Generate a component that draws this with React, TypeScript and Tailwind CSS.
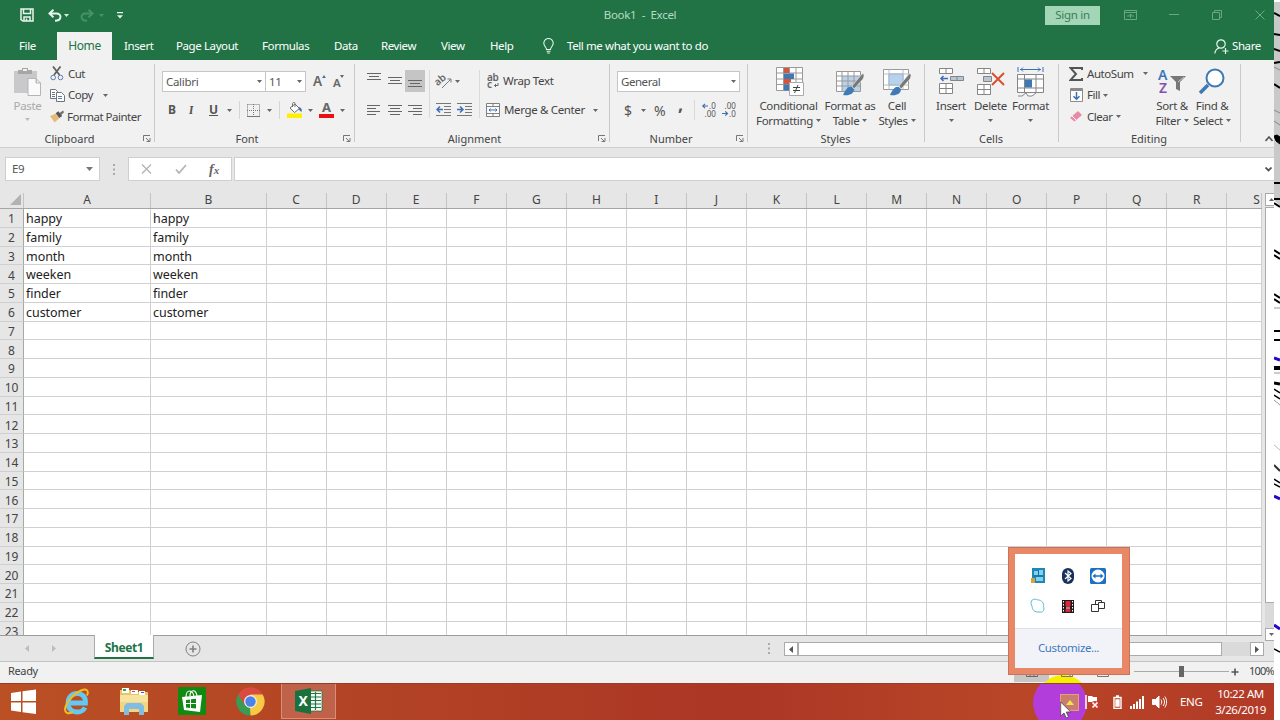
import React from 'react';

const columns = ['A', 'B', 'C', 'D', 'E', 'F', 'G', 'H', 'I', 'J', 'K', 'L', 'M', 'N', 'O', 'P', 'Q', 'R', 'S'];
const words = ['happy', 'family', 'month', 'weeken', 'finder', 'customer'];
const rows = Array.from({ length: 23 }, (_, i) => i + 1);

const tabs = [
  { label: 'Insert', width: 'w-[52px]' },
  { label: 'Page Layout', width: 'w-[86px]' },
  { label: 'Formulas', width: 'w-[72px]' },
  { label: 'Data', width: 'w-[47px]' },
  { label: 'Review', width: 'w-[60px]' },
  { label: 'View', width: 'w-[49px]' },
  { label: 'Help', width: 'w-[52px]' },
];

const colWidth = (i: number) => (i === 0 ? 127 : i === 1 ? 115.6 : i === 18 ? 34.6 : 60.06);

type BoxProps = { className?: string; children?: React.ReactNode };

function Caret({ className = 'text-[#666]' }: { className?: string }) {
  return (
    <svg className={`shrink-0 ${className}`} width="5" height="3" viewBox="0 0 5 3" fill="currentColor">
      <path d="M0 0h5L2.5 3z" />
    </svg>
  );
}

function Launcher() {
  return (
    <svg width="8" height="7" viewBox="0 0 8 7" fill="none" stroke="#777">
      <path d="M.5 6V.5H7M3 3l3 3M7 3v3.5H3.5" />
    </svg>
  );
}

function Group({ label, width, pad = '', launcher, children }: { label: string; width: string; pad?: string; launcher?: boolean; children: React.ReactNode }) {
  return (
    <div className={`${width} relative flex h-[86px] shrink-0 flex-col`}>
      <div className={`h-[71px] ${pad}`}>{children}</div>
      <div className={`flex h-[15px] items-center justify-center text-[11px] leading-none text-[#444] ${launcher ? 'pr-4' : 'pr-[2px]'}`}>{label}</div>
      {launcher && <div className="absolute right-[4px] bottom-[4px]"><Launcher /></div>}
      <div className="absolute top-[4px] right-0 h-[78px] w-px bg-[#c9c9c9]" />
    </div>
  );
}

function Slot({ className = '', children }: BoxProps) {
  return <div className={`flex h-full shrink-0 items-center whitespace-nowrap ${className}`}>{children}</div>;
}

function Lines({ d }: { d: string }) {
  return (
    <svg width="14" height="13" viewBox="0 0 14 13" fill="none" stroke="#666">
      <path d={d} />
    </svg>
  );
}

function TitleBar() {
  return (
    <div className="flex h-[30px] items-center text-[#e8f6ec]">
      <Slot className="w-[28px] pl-[20px]">
        <svg className="shrink-0" width="14" height="14" viewBox="0 0 14 14" fill="none" stroke="currentColor" strokeWidth="1.5">
          <path d="M1 1h12v12H3L1 11.5zM3.5 1v4.5h7V1M4 13V9h6v4M6.5 10.5V13" />
        </svg>
      </Slot>
      <Slot className="ml-[20px] w-[16px]">
        <svg width="14" height="13" viewBox="0 0 14 13" fill="none" stroke="currentColor" strokeWidth="1.9">
          <path d="M5.5.8 1.3 4.5l4.2 3.7M1.5 4.5h7c5.5 0 5.500 7.300-1.500 7.300" />
        </svg>
      </Slot>
      <Slot className="w-[16px]"><Caret className="text-[#d5ecdc]" /></Slot>
      <Slot className="w-[19px] opacity-50">
        <svg width="14" height="13" viewBox="0 0 14 13" fill="none" stroke="#6fae88" strokeWidth="1.9">
          <path d="m8.500.8 4.200 3.700-4.200 3.700M12.500 4.500h-7c-5.500 0-5.500 7.300 1.500 7.300" />
        </svg>
      </Slot>
      <Slot className="w-[18px] opacity-50"><Caret className="text-[#6fae88]" /></Slot>
      <Slot className="w-[479px]">
        <svg width="6" height="7" viewBox="0 0 6 7" fill="currentColor"><path d="M0 0h6v1.200H0zM0 3.200h6L3 6.500z" /></svg>
      </Slot>
      <Slot className="w-[88px] justify-center text-[11.500px] tracking-[-0.3px] whitespace-pre text-[#b5dbc2]">Book1  -  Excel</Slot>
      <div className="ml-[361px] flex h-[19px] w-[55px] shrink-0 items-center justify-center bg-[#a3d5b7] text-[11.500px] tracking-[-0.3px] text-[#3a7d56]">Sign in</div>
      <svg className="ml-[24px] shrink-0" width="13" height="10" viewBox="0 0 13 10" fill="none" stroke="#6aa883">
        <path d="M.5.5h12v9H.5zM.5 2.500h12M3 6h2.500M7.500 6H10M6.500 8V4M5 5.500 6.500 4 8 5.500" />
      </svg>
      <svg className="ml-[32px] shrink-0" width="10" height="10" viewBox="0 0 10 10" stroke="#6aa883"><path d="M0 4.500h10" /></svg>
      <svg className="ml-[33px] shrink-0" width="10" height="10" viewBox="0 0 10 10" fill="none" stroke="#6aa883"><path d="M.5 2.500h7v7h-7zM2.500 2.500v-2h7v7h-2" /></svg>
      <svg className="ml-[33px] shrink-0" width="10" height="10" viewBox="0 0 10 10" fill="none" stroke="#6aa883"><path d="m.5.5 9 9M9.500.5l-9 9" /></svg>
    </div>
  );
}

function TabBar() {
  return (
    <div className="flex h-[30px] items-center pt-[2px] text-[11.500px] tracking-[-0.400px] text-white">
      <Slot className="w-[57px] pl-[19px]">File</Slot>
      <div className="flex h-[28px] w-[55px] shrink-0 items-center justify-center bg-[#f1f1f1] text-[12px] text-[#217346]">Home</div>
      <div className="w-[12px] shrink-0" />
      {tabs.map((tab) => (
        <Slot key={tab.label} className={tab.width}>{tab.label}</Slot>
      ))}
      <Slot className="w-[25px]">
        <svg className="ml-px" width="11" height="16" viewBox="0 0 11 16" fill="none" stroke="#e8f6ec" strokeWidth="1.100">
          <path d="M3.500 11.500c0-2.500-2.700-3.200-2.700-6.300a4.700 4.700 0 0 1 9.400 0c0 3.100-2.700 3.800-2.700 6.300zM3.500 13.300h4M4.200 15h2.600" />
        </svg>
      </Slot>
      <Slot className="w-[647px]">Tell me what you want to do</Slot>
      <Slot className="w-[18px]">
        <svg width="15" height="15" viewBox="0 0 15 15" fill="none" stroke="#e8f6ec" strokeWidth="1.200">
          <circle cx="7" cy="5" r="4.200" /><path d="M.8 14.500c.4-3 2-4.800 4.200-5.500M11.500 9v6M8.500 12h6" />
        </svg>
      </Slot>
      <Slot>Share</Slot>
    </div>
  );
}

function ClipboardGroup() {
  return (
    <Group label="Clipboard" width="w-[155px]" pad="flex" launcher>
      <div className="flex w-[50px] flex-col items-center pt-[7px] pl-[5px] text-[11.500px] text-[#a9a9a9]">
        <svg width="27" height="29" viewBox="0 0 27 29">
          <path d="M0 4h23v22H0z" fill="#c9c9cb" /><path d="M4 3h4V1h6v2h4v4H4z" fill="#a6a6a6" /><path d="M9 2h4v2H9z" fill="#f1f1f1" />
          <path d="M14 11.500h8l4.500 4.500v12.500H14zM22 11.500V16h4.500" fill="#fafafa" stroke="#b5b5b5" />
        </svg>
        <div className="mt-[2px] leading-[16px] tracking-[-0.3px]">Paste</div>
        <Caret className="mt-[4px] text-[#bbb]" />
      </div>
      <div className="text-[11.500px] tracking-[-0.5px]">
        <div className="mt-[3px] flex h-[21px] items-center">
          <svg className="mr-[4px]" width="14" height="15" viewBox="0 0 14 15" fill="none">
            <path d="M3 .5 9.500 9M10.500.5 4 9" stroke="#606060" strokeWidth="1.800" /><circle cx="3.200" cy="11.500" r="2.300" stroke="#5a7fb2" /><circle cx="10.500" cy="11.500" r="2.300" stroke="#5a7fb2" />
          </svg>Cut
        </div>
        <div className="flex h-[22px] items-center">
          <svg className="mr-[3px]" width="15" height="13" viewBox="0 0 15 13" fill="#fff" stroke="#6d7480">
            <path d="M.5.5h5l2 2v7h-7zM2 3.500h3M2 5.500h3M2 7.500h3" /><path d="M6.500 3.500h5l3 3v6h-8z" /><path d="M8 7.500h4M8 9.500h4" stroke="#5a7fb2" />
          </svg>
          <span className="w-[35px]">Copy</span><Caret />
        </div>
        <div className="flex h-[21px] items-center">
          <svg className="mr-[3px]" width="14" height="13" viewBox="0 0 15 13">
            <path d="M0 6 6 3.500l4 5L5 13z" fill="#e5bb7a" /><path d="m6 3 3-2 4 5-3 2z" fill="#555" /><path d="m10 3 4-3 1 2-3 3z" fill="#6d6d6d" />
          </svg>Format Painter
        </div>
      </div>
    </Group>
  );
}

function FontGroup() {
  return (
    <Group label="Font" width="w-[200px]" launcher>
      <div className="flex h-[31px] pt-[11px] pl-[7px] text-[11.500px] tracking-[-0.3px] text-[#555]">
        <div className="flex h-[21px] w-[104px] shrink-0 items-center justify-between border border-[#c6c6c6] bg-white px-[3px]">Calibri <Caret /></div>
        <div className="flex h-[21px] w-[40px] shrink-0 items-center justify-between border border-l-0 border-[#c6c6c6] bg-white px-[3px]">11 <Caret /></div>
        <div className="flex h-[21px] w-[25px] shrink-0 items-center pl-[7px] text-[13.500px] font-semibold text-[#666]">A<svg className="mb-[11px] shrink-0" width="4" height="3" viewBox="0 0 4 3"><path d="M0 3h4L2 0z" fill="#4472b4" /></svg></div>
        <div className="flex h-[21px] items-center pt-[2px] pl-[2px] text-[11.500px] font-semibold text-[#666]">A<svg className="mb-[13px] shrink-0" width="4" height="3" viewBox="0 0 4 3"><path d="M0 0h4L2 3z" fill="#666" /></svg></div>
      </div>
      <div className="mt-[8px] flex h-[22px] items-center pl-[13px] text-[12px] text-[#555]">
        <b className="w-[21px] shrink-0">B</b>
        <i className="w-[20px] shrink-0 font-serif font-semibold">I</i>
        <span className="w-[17px] shrink-0 font-bold underline">U</span>
        <Caret className="ml-px text-[#666]" />
        <div className="mr-[7px] ml-[7px] h-[18px] w-px bg-[#d5d5d5]" />
        <svg className="mr-[7px] shrink-0" width="13" height="13" viewBox="0 0 13 13" fill="none" stroke="#777">
          <path d="M.5.5h12v12M.5.5v12M6.500 0v13M0 6.500h13" strokeDasharray="1 1" /><path d="M0 12.500h13" />
        </svg>
        <Caret />
        <div className="mr-[6px] ml-[7px] h-[18px] w-px bg-[#d5d5d5]" />
        <svg className="mr-[5px] ml-px shrink-0" width="16" height="16" viewBox="0 0 16 16">
          <path d="m3 6 5-4 4.500 4.500-5 4z" fill="#fff" stroke="#707070" /><path d="M5.500 5V1.500C6 0 8 0 8 1.500V5" fill="none" stroke="#707070" /><path d="M12 5c3 1 3 3 2.500 5-1.500-1-2.500-2-3-3z" fill="#4472b4" /><path d="M0 11.500h15V16H0z" fill="#ffef00" />
        </svg>
        <Caret />
        <div className="ml-[6px] flex w-[15px] shrink-0 flex-col items-center">
          <span className="h-[11px] text-[13px] leading-[11px] font-bold text-[#666]">A</span>
          <span className="mt-px h-[4px] w-[15px] bg-[#e81010]" />
        </div>
        <Caret className="ml-[6px] text-[#666]" />
      </div>
    </Group>
  );
}

function AlignmentGroup() {
  return (
    <Group label="Alignment" width="w-[255px]" launcher>
      <div className="flex pt-[10px] pl-[8px]">
        <div className="shrink-0">
          <div className="flex h-[22px] items-center">
            <div className="flex h-[21px] w-[21px] items-start justify-center pt-[2px]"><Lines d="M0 .5h14M2 3.500h10M0 6.500h14" /></div>
            <div className="flex h-[21px] w-[21px] items-start justify-center pt-[3px]"><Lines d="M0 3.500h14M2 6.500h10M0 9.500h14" /></div>
            <div className="flex h-[22px] w-[20px] items-end justify-center bg-[#c5c5c5] pb-[4px]"><Lines d="M0 5.500h14M2 8.500h10M0 11.500h14" /></div>
          </div>
          <div className="mt-[6px] flex h-[22px] items-center">
            <div className="w-[21px] pl-[4px]"><Lines d="M0 2.500h13M0 5.500h9M0 8.500h13M0 11.500h9" /></div>
            <div className="w-[21px] pl-[4px]"><Lines d="M0 2.500h14M2 5.500h10M0 8.500h14M2 11.500h10" /></div>
            <div className="w-[20px] pl-[3px]"><Lines d="M0 2.500h14M5 5.500h9M0 8.500h14M5 11.500h9" /></div>
          </div>
        </div>
        <div className="mr-[6px] ml-[4px] h-[48px] w-px shrink-0 bg-[#d9d9d9]" />
        <div className="w-[43px] shrink-0">
          <div className="flex h-[22px] items-center">
            <svg className="mr-[3px] overflow-visible" width="16" height="15" viewBox="0 0 16 15">
              <text x="0" y="11" fontSize="10" fontWeight="600" fill="#666" transform="rotate(-40 4 9) translate(0 -1)">ab</text><path d="M6 14 14.500 5.500M11.500 5h3.500v3.500" fill="none" stroke="#777" />
            </svg>
            <Caret />
          </div>
          <div className="mt-[6px] flex h-[22px] items-center gap-[6px]">
            <svg width="15" height="13" viewBox="0 0 15 13" fill="none">
              <path d="M0 .5h15M8 3.500h7M8 6.500h7M8 9.500h7M0 12.500h15" stroke="#777" /><path d="M7 6.500H1M4 3.500l-3 3 3 3" stroke="#3d6fb5" strokeWidth="1.500" />
            </svg>
            <svg width="15" height="13" viewBox="0 0 15 13" fill="none">
              <path d="M0 .5h15M8 3.500h7M8 6.500h7M8 9.500h7M0 12.500h15" stroke="#777" /><path d="M0 6.500h6M3 3.500l3 3-3 3" stroke="#3d6fb5" strokeWidth="1.500" />
            </svg>
          </div>
        </div>
        <div className="mr-[7px] h-[48px] w-px shrink-0 bg-[#d9d9d9]" />
        <div className="text-[11.500px] tracking-[-0.350px]">
          <div className="flex h-[22px] items-center">
            <svg className="mr-[3px] overflow-visible" width="13" height="16" viewBox="0 0 13 16">
              <text x="0" y="7.500" fontSize="10" fontWeight="600" fill="#666">ab</text><text x="0" y="14.500" fontSize="10" fontWeight="600" fill="#666">c</text><path d="M11 10v2.500H7.500M9 11l-1.500 1.500L9 14" fill="none" stroke="#666" />
            </svg>Wrap Text
          </div>
          <div className="mt-[7px] flex h-[22px] items-center">
            <svg className="mr-[4px] ml-[-1px] shrink-0" width="14" height="14" viewBox="0 0 14 14" fill="#fafafa" stroke="#808080">
              <path d="M.5.5h13v13H.5zM.5 3.500h13M.5 10.500h13M7 .5v3M7 10.500v3" /><path d="M3 7h8M4.500 5.500 3 7l1.500 1.500M9.500 5.500 11 7 9.500 8.500" fill="none" stroke="#3d6fb5" />
            </svg>
            <span className="w-[89px] whitespace-nowrap">Merge &amp; Center</span><Caret />
          </div>
        </div>
      </div>
    </Group>
  );
}

function NumberGroup() {
  return (
    <Group label="Number" width="w-[138px]" launcher>
      <div className="pt-[11px] pl-[7px] text-[11.500px] text-[#555]">
        <div className="flex h-[21px] w-[123px] items-center justify-between border border-[#c6c6c6] bg-white px-[3px] tracking-[-0.450px]">General <Caret /></div>
        <div className="mt-[7px] flex h-[22px] items-center text-[14px]">
          <span className="w-[17px] pl-[7px]">$</span><Caret className="ml-[7px] text-[#666]" />
          <span className="ml-[8px] w-[24px]">%</span>
          <span className="mb-[13px] w-[16px] text-[18px] leading-none font-bold">,</span>
          <div className="h-[20px] w-px shrink-0 bg-[#d9d9d9]" />
          <svg className="ml-[7px] shrink-0 overflow-visible" width="14" height="14" viewBox="0 0 14 14" fontSize="8" fill="#555">
            <path d="M6 3H.8M3 .8.8 3 3 5.200" fill="none" stroke="#3d6fb5" strokeWidth="1.200" /><text x="7" y="6">.0</text><text x="2.500" y="13.500">.00</text>
          </svg>
          <svg className="ml-[6px] shrink-0 overflow-visible" width="14" height="14" viewBox="0 0 14 14" fontSize="8" fill="#555">
            <path d="M0 10.500h5.500M3.300 8.300l2.200 2.200-2.200 2.200" fill="none" stroke="#3d6fb5" strokeWidth="1.200" /><text x="2.500" y="6">.00</text><text x="7" y="13.500">.0</text>
          </svg>
        </div>
      </div>
    </Group>
  );
}

function BigButton({ icon, first, second, width }: { icon: React.ReactNode; first: string; second?: string; width: string }) {
  return (
    <div className={`${width} flex shrink-0 flex-col items-center text-[11.500px] tracking-[-0.350px]`}>
      <div className="flex h-[31px] items-end">{icon}</div>
      <div className="mt-px h-[15px] leading-[15px] whitespace-nowrap">{first}</div>
      <div className="flex h-[15px] items-center gap-[3px] leading-[15px]">{second}<Caret /></div>
    </div>
  );
}

function Brush() {
  return <><path d="M16 19c-4-1-6 2-9 8 6 1 11-1 11-6z" fill="#3f7ab8" /><path d="m16 18 10-12c3-1 2 3 1 5l-9 10z" fill="#777" stroke="#f1f1f1" strokeWidth=".6" /></>;
}

function StylesGroup() {
  return (
    <Group label="Styles" width="w-[177px]" pad="flex pt-[6px] pl-[7px]">
      <BigButton width="w-[67px]" first="Conditional" second="Formatting" icon={
        <svg className="ml-[2px]" width="28" height="30" viewBox="0 0 28 30">
          <path d="M.5.500h26v23H.5zM.5 6h26M.5 12h26M.5 17.500h26M7.500.5v23M13.500.5v23M20 .5v23" fill="#fff" stroke="#999" />
          <path d="M8 1h5v5H8zM8 12h7v5H8z" fill="#d75438" /><path d="M8 6.500h10V12H8zM8 17.500h5v6H8z" fill="#3e78b5" />
          <path d="M13.500 15.500h14v13h-14z" fill="#fff" stroke="#aaa" /><path d="M17 20.500h7M17 23.500h7M22 18l-3.500 8" stroke="#444" />
        </svg>} />
      <BigButton width="w-[56px]" first="Format as" second="Table" icon={
        <svg width="29" height="29" viewBox="0 0 29 29">
          <path d="M.500 3.500h24v20H.5z" fill="#fff" /><path d="M6 8h18v15H6z" fill="#b9d2ea" /><path d="M.5 3.500h24v20H.5zM.5 8h24M.5 13h24M.5 18h24M6 3.500v20M12 3.500v20M18 3.500v20" fill="none" stroke="#999" /><Brush />
        </svg>} />
      <BigButton width="w-[38px]" first="Cell" second="Styles" icon={
        <svg width="29" height="29" viewBox="0 0 29 29">
          <path d="M.5 1.500h25v20H.5z" fill="#fff" stroke="#999" /><path d="M.5 6h25M.5 17h25M6 1.500v20M20 1.500v20" stroke="#bbb" /><path d="M6 6h14v11H6z" fill="#b9d2ea" stroke="#93b4d8" /><Brush />
        </svg>} />
    </Group>
  );
}

function CellsGroup() {
  return (
    <Group label="Cells" width="w-[134px]" pad="flex pt-[6px] pl-[7px]">
      <BigButton width="w-[38px]" first="Insert" icon={
        <svg width="25" height="30" viewBox="0 0 25 30" fill="#fff" stroke="#858585">
          <path d="M.5 1.500h13v5H.5zM7 1.500v5M.5 16.500h13v10H.5zM7 16.500v10M.5 21.500h13" /><path d="M11.500 9.500h13v4h-13zM18 9.500v4" fill="#b7c7d8" /><path d="M9 11.500H2M4.500 9 2 11.500 4.500 14" fill="none" stroke="#3d6fb5" strokeWidth="1.500" />
        </svg>} />
      <BigButton width="w-[41px]" first="Delete" icon={
        <svg width="28" height="30" viewBox="0 0 28 30" fill="#fff" stroke="#858585">
          <path d="M.5 1.500h13v5H.5zM7 1.500v5M.5 17.500h13v10H.5zM7 17.500v10M.5 22.500h13" /><path d="M6.500 9.500h8v5h-8z" fill="#b7c7d8" /><path d="m15 6 12 12M27 6 15 18" stroke="#d9502e" strokeWidth="2" />
        </svg>} />
      <BigButton width="w-[39px]" first="Format" icon={
        <svg width="27" height="30" viewBox="0 0 27 30" fill="#fff" stroke="#858585">
          <path d="M1 0v5M26 0v5M3 2.500h21M6 .5l-2 2 2 2M21 .5l2 2-2 2" fill="none" stroke="#3d6fb5" /><path d="M.5 7.500h26v18H.500zM7.500 7.500v18M19 7.500v18M.5 12h26M.5 21h26" /><path d="M8 12.500h7v8H8z" fill="#3e78b5" stroke="none" /><path d="M1 29h4l4-3 2 3h4l4-3" />
        </svg>} />
    </Group>
  );
}

function EditingGroup() {
  return (
    <Group label="Editing" width="w-[182px]" pad="flex pl-[10px]">
      <div className="w-[84px] shrink-0 text-[11.500px] tracking-[-0.450px]">
        <div className="mt-[3px] flex h-[21px] items-center">
          <svg className="mr-[4px] shrink-0" width="14" height="14" viewBox="0 0 14 14" fill="none" stroke="#555" strokeWidth="2"><path d="M13 3V1H1.500L7 7l-5.500 6H13v-2" /></svg>
          <span className="w-[56px]">AutoSum</span><Caret />
        </div>
        <div className="flex h-[22px] items-center">
          <svg className="mr-[4px] ml-px" width="13" height="14" viewBox="0 0 13 14" fill="#fff" stroke="#8b8b8b"><path d="M.5.5h12v13H.5z" /><path d="M1 2h11" strokeWidth="2" /><path d="M6.500 4v7M3.500 8.200l3 3 3-3" fill="none" stroke="#3d6fb5" strokeWidth="1.500" /></svg>
          <span className="mr-[3px]">Fill</span><Caret />
        </div>
        <div className="flex h-[21px] items-center">
          <svg className="mr-[5px] ml-px" width="12" height="11" viewBox="0 0 12 11"><path d="M0 7 8 0l4 4-7.500 6.500z" fill="#e88aa5" /><path d="m2 5 4 4" stroke="#fff" /></svg>
          <span className="mr-[3px]">Clear</span><Caret />
        </div>
      </div>
      <div className="flex pt-[6px]">
        <BigButton width="w-[38px]" first="Sort &amp;" second="Filter" icon={
          <svg className="overflow-visible" width="28" height="29" viewBox="0 0 28 29">
            <text x="0" y="11.500" fontSize="14" fontWeight="600" fill="#3d74b8">A</text><text x="1" y="25" fontSize="14" fontWeight="600" fill="#8a4fae">Z</text><path d="M12 8h16l-6 6v9l-4-2v-7z" fill="#777" /><path d="m20 14 6-5" stroke="#ccc" />
          </svg>} />
        <BigButton width="w-[42px]" first="Find &amp;" second="Select" icon={
          <svg width="26" height="29" viewBox="0 0 26 29" fill="#fff" stroke="#3e78b5">
            <path d="m1 25 8-8" strokeWidth="3.500" /><circle cx="16" cy="10" r="8.500" strokeWidth="2" />
          </svg>} />
      </div>
    </Group>
  );
}

function FormulaBar() {
  return (
    <div className="flex h-[43px] items-center border-t border-[#cfcfcf] bg-[#e6e6e6] pl-[5px]">
      <div className="flex h-[24px] w-[95px] shrink-0 items-center justify-between border border-[#cfcfcf] bg-white px-[6px] text-[11.500px] tracking-[-0.3px] text-[#555]">
        E9
        <svg width="7" height="4" viewBox="0 0 7 4"><path d="M0 0h7L3.500 4z" fill="#777" /></svg>
      </div>
      <svg className="ml-[13px] shrink-0" width="2" height="11" viewBox="0 0 2 11" fill="#aaa"><path d="M0 0h2v2H0zM0 4.500h2v2H0zM0 9h2v2H0z" /></svg>
      <div className="ml-[13px] flex h-[24px] w-[104px] shrink-0 items-center border border-[#cfcfcf] bg-white pl-[12px]">
        <svg className="mr-[23px]" width="11" height="10" viewBox="0 0 11 10" stroke="#b5b5b5" strokeWidth="1.400"><path d="m1 .5 9 9M10 .5l-9 9" /></svg>
        <svg className="mr-[22px]" width="12" height="10" viewBox="0 0 12 10" fill="none" stroke="#b5b5b5" strokeWidth="1.800"><path d="M1 5.500 4 9l7-8" /></svg>
        <span className="font-['Liberation_Serif',serif] text-[14px] font-bold text-[#666] italic">f<span className="text-[11px]">x</span></span>
      </div>
      <div className="ml-[2px] flex h-[24px] flex-1 items-center justify-end border border-r-0 border-[#cfcfcf] bg-white pr-[2px]">
        <svg width="7" height="5" viewBox="0 0 7 5" fill="none" stroke="#555" strokeWidth="1.800"><path d="m.5.5 3 3 3-3" /></svg>
      </div>
    </div>
  );
}

function Sheet() {
  return (
    <div className="flex h-[446px] bg-[#e6e6e6]">
      <div className="h-[446px] w-[1262px] shrink-0 overflow-hidden border-b border-[#9c9c9c]">
        <div className="flex h-[19px] border-b border-[#a5a5a5] pt-[3px] text-[12px] text-[#444]">
          <div className="flex w-[24px] shrink-0 items-end justify-end border-r border-[#c4c4c4] pr-[2px] pb-[3px]">
            <svg width="11" height="11" viewBox="0 0 11 11"><path d="M11 0v11H0z" fill="#b2b2b2" /></svg>
          </div>
          {columns.map((c, i) => (
            <div key={c} className={`flex shrink-0 items-center border-r border-[#c4c4c4] pb-[2px] ${i === 18 ? 'justify-end pr-px' : 'justify-center'}`} style={{ width: colWidth(i) }}>{c}</div>
          ))}
        </div>
        {rows.map((r) => (
          <div key={r} className="flex h-[18.750px] text-[12.500px] tracking-[-0.050px]">
            <div className="flex w-[24px] shrink-0 items-center justify-center border-r border-b border-r-[#9fada2] border-b-[#cfcfcf] pt-[3px] text-[12px] text-[#444]">{r}</div>
            {columns.map((c, i) => (
              <div key={c} className="flex shrink-0 items-center border-r border-b border-[#d0d0d0] bg-white pt-[3px] pl-[2px] text-[#222]" style={{ width: colWidth(i) }}>
                {i < 2 ? words[r - 1] : ''}
              </div>
            ))}
          </div>
        ))}
      </div>
      <div className="relative mt-[3px] ml-[3px] h-[448px] w-[9px] shrink-0 overflow-hidden">
        <div className="flex h-[13px] w-[13px] items-center justify-center border border-[#ababab] bg-white"><Caret className="rotate-180 text-[#666]" /></div>
        <div className="mt-px h-[396px] w-[13px] border border-[#ababab] bg-white" />
        <div className="h-[25px] bg-[#dadada]" />
        <div className="flex h-[13px] w-[13px] items-center justify-center border border-[#ababab] bg-white"><Caret /></div>
      </div>
    </div>
  );
}

function SheetTabs() {
  return (
    <div className="flex h-[26px] items-start border-b border-[#c3c3c3] bg-[#e6e6e6]">
      <svg className="mt-[9px] ml-[25px] shrink-0" width="31" height="7" viewBox="0 0 31 7" fill="#bdbdbd"><path d="M4 0v7L0 3.500zM27 0v7l4-3.500z" /></svg>
      <div className="mt-[-1px] ml-[38px] flex h-[24px] w-[60px] shrink-0 items-center justify-center border-x border-b-2 border-x-[#ababab] border-b-[#217346] bg-white pt-[3px] text-[12px] font-bold tracking-[-0.4px] text-[#217346]">Sheet1</div>
      <svg className="mt-[5px] ml-[31px] shrink-0" width="16" height="16" viewBox="0 0 16 16" fill="none" stroke="#808080"><circle cx="8" cy="8" r="7" /><path d="M8 4.500v7M4.500 8h7" strokeWidth="1.600" /></svg>
      <svg className="mt-[7px] ml-[567px] shrink-0" width="2" height="11" viewBox="0 0 2 11" fill="#aaa"><path d="M0 0h2v2H0zM0 4.500h2v2H0zM0 9h2v2H0z" /></svg>
      <div className="mt-[6px] ml-[14px] flex h-[14px] w-[480px] bg-[#dadada]">
        <div className="flex w-[14px] shrink-0 items-center justify-center border border-[#ababab] bg-white"><svg width="4" height="7" viewBox="0 0 4 7"><path d="M4 0v7L0 3.500z" fill="#555" /></svg></div>
        <div className="w-[424px] shrink-0 border border-[#ababab] bg-white" />
        <div className="ml-auto flex w-[14px] shrink-0 items-center justify-center border border-[#ababab] bg-white"><svg width="4" height="7" viewBox="0 0 4 7"><path d="M0 0v7l4-3.500z" fill="#555" /></svg></div>
      </div>
    </div>
  );
}

function StatusBar() {
  return (
    <div className="relative flex h-[21px] shrink-0 items-center overflow-hidden bg-[#f1f1f1] pb-[2px] text-[11px] tracking-[-0.350px] text-[#444]">
      <div className="w-[1014px] shrink-0 pl-[8px]">Ready</div>
      <div className="flex h-[21px] w-[35px] shrink-0 items-center justify-center bg-[#c6c6c6]">
        <svg width="12" height="10" viewBox="0 0 12 10" fill="none" stroke="#666"><path d="M.5.5h11v9H.5zM4 .5v9M8 .5v9M.5 5h11" /></svg>
      </div>
      <div className="absolute top-[13px] left-[1036px] h-[54px] w-[54px] rounded-full bg-[#f6f000]" />
      <svg className="relative ml-[12px] shrink-0" width="12" height="10" viewBox="0 0 12 10" fill="none" stroke="#777"><path d="M.5.5h11v9H.5zM3 3h6v6.500" /></svg>
      <svg className="ml-[24px] shrink-0" width="12" height="10" viewBox="0 0 12 10" fill="none" stroke="#777"><path d="M.5.5h11v9H.5z" /></svg>
      <div className="ml-[18px] h-[2px] w-[3px] shrink-0 bg-[#666]" />
      <div className="ml-[4px] flex h-px w-[95px] shrink-0 items-center justify-center bg-[#aaa]"><div className="h-[11px] w-[5px] bg-[#666]" /></div>
      <svg className="ml-[2px] shrink-0" width="8" height="8" viewBox="0 0 8 8" stroke="#555" strokeWidth="1.600"><path d="M4 .5v7M.5 4h7" /></svg>
      <span className="ml-[10px] tracking-[-0.8px]">100%</span>
    </div>
  );
}

function Taskbar() {
  return (
    <div className="relative flex h-[37px] shrink-0 items-center overflow-hidden border-t border-[#93402b] bg-linear-to-r from-[#ba5024] via-[#ac3725] via-55% to-[#b23a27] text-white">
      <div className="absolute inset-0 bg-linear-to-r from-transparent from-60% via-[#b94627] via-80% to-transparent" />
      <div className="relative flex h-full items-center pb-[2px]">
        <svg className="ml-[10px] shrink-0" width="27" height="25" viewBox="0 0 27 25" fill="#fff"><path d="M1 4 11 2.500V12H1zM12.500 2.300 26 .5V12H12.500zM1 13.500h10V23L1 21.500zM12.500 13.500H26V25l-13.500-1.800z" /></svg>
        {/* Internet Explorer */}
        <svg className="ml-[25px] shrink-0" width="29" height="29" viewBox="0 0 29 29" fill="none">
          <path d="M6.500 16h17c.3-7-4-9.500-8.500-9.500s-9 3.500-9 9.500 4 9 9.500 9c4 0 6-1.500 7.500-4.500" stroke="#63c8f2" strokeWidth="4.800" />
          <path d="M5 26C-1 22 9 8 19 3.500c6-2.500 8 .5 6 5M5 26c1.500.8 4 0 6-1.200" stroke="#f3bd22" strokeWidth="2" />
        </svg>
        {/* File Explorer */}
        <svg className="ml-[28px] shrink-0" width="30" height="28" viewBox="0 0 30 28">
          <path d="M1 3h10l2 2h16v18H1z" fill="#e8c667" /><path d="M3 1h7v5H3z" fill="#fff" /><path d="M4 2h3v2H4z" fill="#2fa84f" /><path d="M12 3h7v4h-7z" fill="#fff" /><path d="M13 4h3v1h-3z" fill="#d44" /><path d="M20 4h6v4h-6z" fill="#fff" /><path d="M22 5h3v1h-3z" fill="#36c" />
          <path d="M1 8h28v17H1z" fill="#f7e3a0" /><path d="M1 15h28v10H1z" fill="#f1d681" /><path d="M5 28v-9l3-3h14l3 3v9h-5v-6h-10v6z" fill="#81bce3" />
        </svg>
        {/* Store */}
        <svg className="ml-[29px] shrink-0" width="28" height="28" viewBox="0 0 28 28">
          <path d="M0 0h28v28H0z" fill="#108a10" /><path d="m4 10 20-2-2 17-16-2z" fill="#fff" /><path d="M8 10c0-8 7-8 8 0M12 9c0-7 6-7 7 0" fill="none" stroke="#fff" strokeWidth="1.200" /><path d="m8 13 4-.5V16H8zM13 12.300l5-.5V16h-5zM8 17h4v4l-4-.500zM13 17h5v4.500l-5-.5z" fill="#108a10" />
        </svg>
        {/* Chrome */}
        <svg className="ml-[30px] shrink-0" width="29" height="29" viewBox="0 0 29 29">
          <path d="M14.500 14.500 2.300 7.500a14 14 0 0 1 24.400 0z" fill="#d94b40" /><path d="M14.500 14.500 2.300 7.500a14 14 0 0 0 12.200 21z" fill="#3a9b55" /><path d="M14.500 14.500h-1l1 14A14 14 0 0 0 26.700 7.500H14z" fill="#f7ca45" /><path d="m2.300 7.500 6 10.500 6-3.500V7.500z" fill="#d94b40" />
          <path d="m2.300 7.500 6 10.500L14 21l-4 6.800A14 14 0 0 1 2.300 7.500z" fill="#3a9b55" /><circle cx="14.500" cy="14.500" r="6.500" fill="#f4ede0" /><circle cx="14.500" cy="14.500" r="5.200" fill="#4a84e8" />
        </svg>
        <div className="ml-[16px] flex h-[36px] w-[55px] shrink-0 items-center justify-center border border-[#d98e7a] bg-[#c0624a]">
          <svg width="28" height="26" viewBox="0 0 28 26">
            <path d="M14 3h13v20H14z" fill="#f4fbf6" stroke="#17723d" strokeWidth=".7" /><path d="M15 5.500h11M15 9h11M15 12.500h11M15 16h11M15 19.500h11M20.500 4v18" stroke="#257448" strokeWidth="1.200" /><path d="M0 3 16 0v26L0 23z" fill="#19713e" /><text x="3.500" y="18" fontSize="14" fontWeight="700" fill="#fff">X</text>
          </svg>
        </div>
      </div>
      <div className="absolute top-[-8px] left-[1033px] h-[54px] w-[54px] rounded-full bg-[#b33ddb]" />
      <div className="relative ml-[724px] flex h-full items-center">
        <div className="flex h-[17px] w-[19px] shrink-0 items-center justify-center border border-[#e0a36e] bg-[#cb7c72]"><svg width="8" height="5" viewBox="0 0 8 5"><path d="M0 5h8L4 0z" fill="#f3e34b" /></svg></div>
        <svg className="ml-[6px] shrink-0" width="14" height="14" viewBox="0 0 14 14"><path d="M1 0v14" stroke="#fff" strokeWidth="1.500" /><path d="M3 1h4l1 1h4v6H8L7 7H3z" fill="#fff" /><circle cx="10" cy="10" r="4" fill="#d33b2f" /><path d="m7.500 7.500 5 5M12.500 7.500l-5 5" stroke="#fff" strokeWidth="1.600" /></svg>
        <svg className="ml-[14px] shrink-0" width="9" height="14" viewBox="0 0 9 14" fill="none" stroke="#fff" strokeWidth="1.400"><path d="M1 2.500h7v11H1zM3 1h3" /><path d="M3 5h3v6H3z" fill="#fff" /></svg>
        <svg className="ml-[8px] shrink-0" width="14" height="13" viewBox="0 0 14 13" fill="#fff"><path d="M0 10h2v3H0zM3 8h2v5H3zM6 5.500h2V13H6zM9 3h2v10H9zM12 0h2v13h-2z" /></svg>
        <svg className="ml-[8px] shrink-0" width="15" height="14" viewBox="0 0 15 14" fill="none" stroke="#fff"><path d="M.5 4.500h3L7 1v12L3.500 9.500h-3z" fill="#fff" /><path d="M9 4.500c1 1.500 1 3.500 0 5M11 3c2 2.500 2 5.500 0 8M12.800 1.500c2.400 3.500 2.400 7.500 0 11" /></svg>
        <span className="ml-[13px] w-[31px] text-[11.500px] tracking-[-0.3px]">ENG</span>
        <div className="w-[59px] text-center text-[11.500px] leading-[16px] tracking-[-0.450px] whitespace-nowrap"><div>10:22 AM</div><div>3/26/2019</div></div>
      </div>
    </div>
  );
}

function TrayPopup() {
  return (
    <div className="absolute top-[547px] left-[1008px] flex h-[128px] w-[122px] flex-col border border-[#c9735a] bg-[#e98867] p-[6px] pr-[7px]">
      <div className="grid h-[74px] grid-cols-[30px_30px_30px] place-items-center content-center gap-y-[14px] bg-white pl-[8px]">
        <svg width="16" height="16" viewBox="0 0 16 16"><path d="M2 0h13v15H2z" fill="#1f86b5" /><path d="M4 3h4v4H4zM9 2h4v5H9zM6 9h7v4H6z" fill="#7fd3ee" /><path d="M4 8h9M8.500 2v6" stroke="#1a6f9c" /><path d="M1 10h4v5H1z" fill="#d5a53a" /></svg>
        <svg width="12" height="16" viewBox="0 0 12 16"><rect width="12" height="16" rx="6" fill="#17315c" /><path d="m3 5 6 5.500L6 13V3l3 2.500L3 11" fill="none" stroke="#fff" strokeWidth="1.200" /></svg>
        <svg width="16" height="16" viewBox="0 0 16 16"><rect width="16" height="16" rx="1.500" fill="#1b70c5" /><circle cx="8" cy="8" r="6.500" fill="#fff" /><path d="m2.500 8 3-2.500v1.700h5V5.500l3 2.500-3 2.500V8.800h-5v1.700z" fill="#1b70c5" /></svg>
        <svg width="16" height="16" viewBox="0 0 16 16"><path d="M1 5.500C1 1 4.500.5 7.500 1.800c4.500.2 6.700 3.700 6 6.700 1.500 4-1 6.500-4.500 5.500C4.500 14.500 2 11.500 2.200 8.500 1.500 7.500 1 6.500 1 5.500z" fill="#fff" stroke="#58bcc9" /></svg>
        <svg width="12" height="13" viewBox="0 0 12 13"><path d="M0 0h12v13H0z" fill="#25191b" /><path d="M3.500 1h5v5l-1 1h-3l-1-1zM3.500 9h5v3h-5z" fill="#dd2638" /><path d="M1.500 1v11M10.500 1v11" stroke="#fff" strokeDasharray="1.500 1.500" /><path d="M4 8h4" stroke="#fff" /></svg>
        <svg width="14" height="14" viewBox="0 0 14 14" fill="#fff" stroke="#333"><path d="M4.500 1.500h6v6h-6z" /><path d="M7.500 3.500h6v6h-6z" /><path d="M.5 5.500h7v7h-7z" /></svg>
      </div>
      <div className="flex h-[40px] items-center justify-center border-t border-[#dce0e6] bg-[#f1f3f8] pb-[2px] text-[11.500px] tracking-[-0.400px] text-[#3f79bd]">Customize...</div>
    </div>
  );
}

function DesktopEdge() {
  return (
    <svg width="6" height="720" viewBox="0 0 6 720" fill="none" stroke="#000">
      <path d="M0 0h6v720H0z" fill="#fff" stroke="none" /><path d="M0 2h6v204L0 200z" fill="#c9c9c9" stroke="none" />
      <path d="m0 13 6 3M0 34l6 1M0 49l6 2M0 63l6-1M0 84l6 4M0 183h6M0 199h6" strokeWidth="2" />
      <path d="m0 67 6 3M0 110l6 3M0 121l6 4" stroke="#888" /><path d="m0 136 3-1 3 2v7l-4-3z" fill="#000" />
      <path d="m0 203 6 4M0 250l6 4M0 255l6 4M0 294l6 4M0 299l6 4M0 331h6M0 340h6" strokeWidth="2" />
      <path d="M0 308h6M0 373h6M0 400l6 5" stroke="#999" /><path d="m0 358 6 2" stroke="#2207c9" strokeWidth="3" /><path d="M0 368h6" strokeWidth="4" /><path d="m0 383 6 1" strokeWidth="3" />
      <path d="m0 389 6 4M0 395l6 4M0 479l6 4M0 484l6 3" strokeWidth="1.500" /><path d="m0 445 6 5" stroke="#bbb" /><path d="m0 465 6 6" stroke="#333" strokeWidth="2" />
      <path d="m0 496 6 3M0 625l6 4" stroke="#2207c9" strokeWidth="3" /><path d="m0 649 6 3" strokeWidth="1.500" />
    </svg>
  );
}

export default function App() {
  return (
    <div className="relative flex h-[720px] w-[1280px] overflow-hidden font-['Noto_Sans','Open_Sans',sans-serif] text-[#444]">
      <div className="flex w-[1274px] shrink-0 flex-col overflow-hidden">
        <div className="h-[60px] shrink-0 bg-[#217346]">
          <TitleBar />
          <TabBar />
        </div>
        <div className="flex h-[87px] shrink-0 bg-[#f1f1f1]">
          <ClipboardGroup />
          <FontGroup />
          <AlignmentGroup />
          <NumberGroup />
          <StylesGroup />
          <CellsGroup />
          <EditingGroup />
          <svg className="mt-[76px] ml-[24px] shrink-0" width="8" height="6" viewBox="0 0 8 6" fill="none" stroke="#555" strokeWidth="1.600"><path d="m.5 5 3.500-4L7.500 5" /></svg>
        </div>
        <FormulaBar />
        <Sheet />
        <SheetTabs />
        <StatusBar />
        <Taskbar />
      </div>
      <DesktopEdge />
      <TrayPopup />
      {/* mouse pointer */}
      <svg className="absolute top-[701px] left-[1060px]" width="12" height="18" viewBox="0 0 12 18"><path d="M.7 1v14l3.300-3 2.200 5 2.300-1-2.200-5h4.500z" fill="#fff" stroke="#444" strokeWidth=".8" /></svg>
    </div>
  );
}
